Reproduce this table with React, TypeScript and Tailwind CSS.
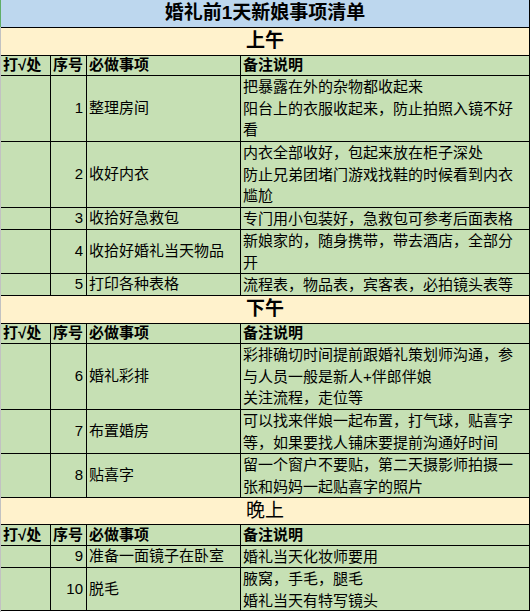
import React from 'react';

type Item = {
  n: number;
  task: string;
  notes: string[];
  h: string;
};

type Section = {
  name: string;
  bold: boolean;
  sectionH: string;
  headerH: string;
  items: Item[];
};

const SECTIONS: Section[] = [
  {
    name: '上午',
    bold: true,
    sectionH: 'h-[28px]',
    headerH: 'h-[20px]',
    items: [
      { n: 1, task: '整理房间', notes: ['把暴露在外的杂物都收起来', '阳台上的衣服收起来，防止拍照入镜不好', '看'], h: 'h-[66px]' },
      { n: 2, task: '收好内衣', notes: ['内衣全部收好，包起来放在柜子深处', '防止兄弟团堵门游戏找鞋的时候看到内衣', '尴尬'], h: 'h-[66px]' },
      { n: 3, task: '收拾好急救包', notes: ['专门用小包装好，急救包可参考后面表格'], h: 'h-[22px]' },
      { n: 4, task: '收拾好婚礼当天物品', notes: ['新娘家的，随身携带，带去酒店，全部分', '开'], h: 'h-[44px]' },
      { n: 5, task: '打印各种表格', notes: ['流程表，物品表，宾客表，必拍镜头表等'], h: 'h-[22px]' },
    ],
  },
  {
    name: '下午',
    bold: true,
    sectionH: 'h-[28px]',
    headerH: 'h-[20px]',
    items: [
      { n: 6, task: '婚礼彩排', notes: ['彩排确切时间提前跟婚礼策划师沟通，参', '与人员一般是新人+伴郎伴娘', '关注流程，走位等'], h: 'h-[66px]' },
      { n: 7, task: '布置婚房', notes: ['可以找来伴娘一起布置，打气球，贴喜字', '等，如果要找人铺床要提前沟通好时间'], h: 'h-[44px]' },
      { n: 8, task: '贴喜字', notes: ['留一个窗户不要贴，第二天摄影师拍摄一', '张和妈妈一起贴喜字的照片'], h: 'h-[44px]' },
    ],
  },
  {
    name: '晚上',
    bold: false,
    sectionH: 'h-[27px]',
    headerH: 'h-[21px]',
    items: [
      { n: 9, task: '准备一面镜子在卧室', notes: ['婚礼当天化妆师要用'], h: 'h-[22px]' },
      { n: 10, task: '脱毛', notes: ['腋窝，手毛，腿毛', '婚礼当天有特写镜头'], h: 'h-[43px]' },
    ],
  },
];

function HeaderRow({ h }: { h: string }) {
  return (
    <div className={`flex ${h} border-b border-black bg-[#c6e0b4] font-bold text-[15px]`}>
      <div className="w-[50px] border-r border-black pl-[2px] flex items-center whitespace-nowrap">打√处</div>
      <div className="w-[36px] border-r border-black pl-[2px] flex items-center">序号</div>
      <div className="w-[154px] border-r border-black pl-[2px] flex items-center">必做事项</div>
      <div className="w-[289px] border-r border-black pl-[2px] flex items-center">备注说明</div>
    </div>
  );
}

function ItemRow({ item }: { item: Item }) {
  return (
    <div className={`flex ${item.h} border-b border-black bg-[#c6e0b4] text-[15px]`}>
      <div className="w-[50px] border-r border-black" />
      <div className="w-[36px] border-r border-black pr-[3px] flex items-center justify-end">{item.n}</div>
      <div className="w-[154px] border-r border-black pl-[2px] flex items-center whitespace-nowrap">{item.task}</div>
      <div className="w-[289px] border-r border-black pl-[2px] leading-[21.6px] whitespace-nowrap">
        {item.notes.map((line, i) => (
          <div key={i}>{line}</div>
        ))}
      </div>
    </div>
  );
}

export default function App() {
  return (
    <div
      className="flex w-[530px] h-[612px] bg-white text-black"
      style={{ fontFamily: '"Liberation Sans", "Noto Sans CJK SC", sans-serif' }}
    >
      {/* row header edge */}
      <div className="w-[1px] flex flex-col">
        <div className="h-[27px] bg-[#5fae67]" />
        <div className="flex-1 bg-[#c2c2c2]" />
      </div>

      <div className="w-[529px] flex flex-col">
        <div className="h-[28px] border-b border-r border-black bg-[#bdd7ee] flex items-center justify-center text-[19px] font-bold">
          婚礼前1天新娘事项清单
        </div>

        {SECTIONS.map((s) => (
          <React.Fragment key={s.name}>
            <div
              className={`${s.sectionH} border-b border-r border-black bg-[#fff2cc] flex items-center justify-center text-[19px] ${
                s.bold ? 'font-bold' : 'font-normal'
              }`}
            >
              {s.name}
            </div>
            <HeaderRow h={s.headerH} />
            {s.items.map((it) => (
              <ItemRow key={it.n} item={it} />
            ))}
          </React.Fragment>
        ))}
      </div>
    </div>
  );
}
